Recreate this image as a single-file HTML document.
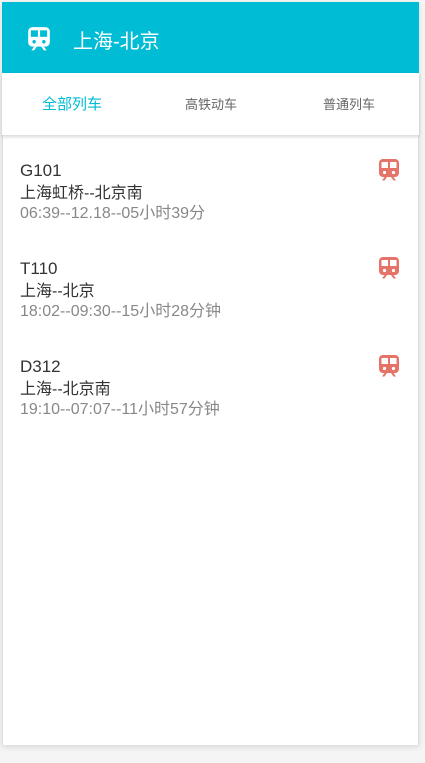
<!DOCTYPE html>
<html><head><meta charset="utf-8"><style>
body{margin:0;width:425px;height:763px;background:#f5f5f5;font-family:"Liberation Sans","Noto Sans CJK SC",sans-serif;position:relative;overflow:hidden}
.frame{position:absolute;left:2px;top:2px;width:417px;height:743px;background:#fff;box-shadow:0 2px 6px rgba(0,0,0,.12);border-left:1px solid #ddd;border-right:1px solid #ddd;box-sizing:border-box}
.hdr{position:absolute;left:2px;top:2px;width:417px;height:71px;background:#00bcd4}
.hdr svg{position:absolute;left:24px;top:24px}
.hdr .t{position:absolute;left:71px;top:23px;color:#fff;font-size:20px}
.tabs{position:absolute;left:2px;top:73px;width:417px;height:62px;background:#fff;box-shadow:0 2px 3px rgba(0,0,0,.15)}
.tab{position:absolute;top:21px;font-size:13px;color:#666;transform:translateX(-50%)}
.item{position:absolute;left:20px;width:385px}
.item .n{font-size:17px;color:#333;line-height:22px}
.item .r{font-size:16px;color:#333;margin-top:2px;line-height:20px}
.item .d{font-size:16px;color:#888;line-height:19px}
.item svg{position:absolute;left:357px;top:-2px}
</style></head><body>
<div class="frame"></div>
<div class="hdr"><svg width="26" height="26" viewBox="0 0 24 24"><g fill="#fff"><rect x="2" y="1" width="20" height="18" rx="4"/><path d="M5 22.5 L7.5 19 H10 L7.5 22.5 Z M19 22.5 L16.5 19 H14 L16.5 22.5 Z"/></g><g fill="#00bcd4"><rect x="4.5" y="4" width="6.5" height="6"/><rect x="13" y="4" width="6.5" height="6"/><circle cx="7.5" cy="14.5" r="1.6"/><circle cx="16.5" cy="14.5" r="1.6"/></g></svg><div class="t">上海-北京</div></div>
<div class="tabs">
<div class="tab" style="left:70px;color:#00bcd4;font-size:15px;top:20px">全部列车</div>
<div class="tab" style="left:209px">高铁动车</div>
<div class="tab" style="left:347px">普通列车</div>
</div>
<div class="item" style="top:160px"><div class="n">G101</div><div class="r">上海虹桥--北京南</div><div class="d">06:39--12.18--05小时39分</div><svg width="24" height="24" viewBox="0 0 24 24"><g fill="#e57368"><rect x="2" y="1" width="20" height="18" rx="4"/><path d="M5 22.5 L7.5 19 H10 L7.5 22.5 Z M19 22.5 L16.5 19 H14 L16.5 22.5 Z"/></g><g fill="#fff"><rect x="4.5" y="4" width="6.5" height="6"/><rect x="13" y="4" width="6.5" height="6"/><circle cx="7.5" cy="14.5" r="1.6"/><circle cx="16.5" cy="14.5" r="1.6"/></g></svg></div>
<div class="item" style="top:258px"><div class="n">T110</div><div class="r">上海--北京</div><div class="d">18:02--09:30--15小时28分钟</div><svg width="24" height="24" viewBox="0 0 24 24"><g fill="#e57368"><rect x="2" y="1" width="20" height="18" rx="4"/><path d="M5 22.5 L7.5 19 H10 L7.5 22.5 Z M19 22.5 L16.5 19 H14 L16.5 22.5 Z"/></g><g fill="#fff"><rect x="4.5" y="4" width="6.5" height="6"/><rect x="13" y="4" width="6.5" height="6"/><circle cx="7.5" cy="14.5" r="1.6"/><circle cx="16.5" cy="14.5" r="1.6"/></g></svg></div>
<div class="item" style="top:356px"><div class="n">D312</div><div class="r">上海--北京南</div><div class="d">19:10--07:07--11小时57分钟</div><svg width="24" height="24" viewBox="0 0 24 24"><g fill="#e57368"><rect x="2" y="1" width="20" height="18" rx="4"/><path d="M5 22.5 L7.5 19 H10 L7.5 22.5 Z M19 22.5 L16.5 19 H14 L16.5 22.5 Z"/></g><g fill="#fff"><rect x="4.5" y="4" width="6.5" height="6"/><rect x="13" y="4" width="6.5" height="6"/><circle cx="7.5" cy="14.5" r="1.6"/><circle cx="16.5" cy="14.5" r="1.6"/></g></svg></div>
</body></html>
